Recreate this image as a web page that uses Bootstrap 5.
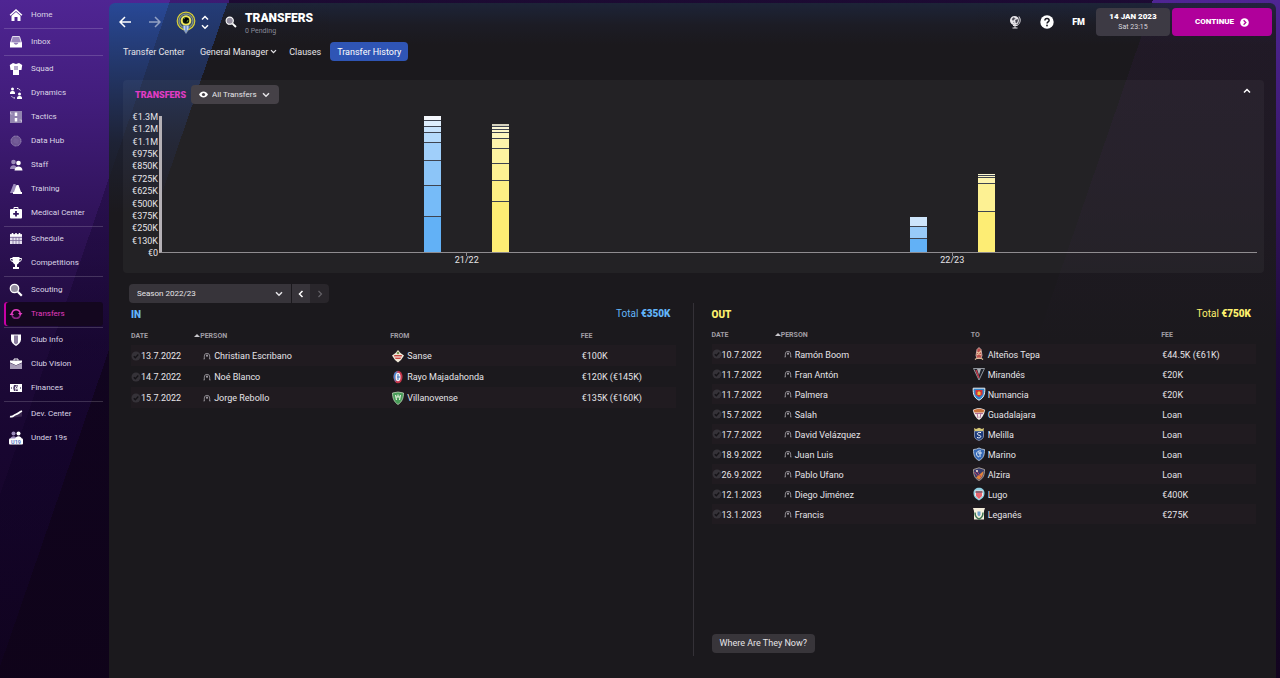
<!DOCTYPE html>
<html lang="en" data-bs-theme="dark">
<head>
<meta charset="utf-8">
<meta name="viewport" content="width=device-width, initial-scale=1">
<title>Transfers</title>
<link href="https://cdn.jsdelivr.net/npm/bootstrap@5.3.0/dist/css/bootstrap.min.css" rel="stylesheet">
<style>
body{
  font-family:Roboto,"Liberation Sans",sans-serif;font-size:9px;line-height:12px;color:#e6e4e8;
  background:
    linear-gradient(109deg,transparent 161px,rgba(10,0,30,.28) 161px 217px,rgba(14,3,24,.78) 217px 1090px,transparent 1090px) no-repeat,
    linear-gradient(180deg,#4f2593 0,#421d7c 100px,#2e1256 230px,#1e0a3a 340px,#180630 450px,#13041f 678px) no-repeat #13041f;
}
a{color:inherit;text-decoration:none}
button{line-height:12px}
/* sidebar */
.side{width:109px;flex:none;padding:3px 6px 0 4px}
.side a{display:flex;align-items:center;height:24px;padding-left:5px;gap:8px;font-size:8px;color:#dcd6e6;border-radius:3px}
.side a svg{width:14px;height:14px;flex:none}
.side a.now{background:#14071f;color:#e23bc0;box-shadow:inset 2px 0 #c800a5}
.side hr{margin:1px 0;border:0;height:1px;background:#fff;opacity:.17}
.side hr.tight{margin-bottom:0}
/* main panel */
.panel{
  margin:3px 4px 0 0;padding:4px 12px 22px 14px;border-radius:6px 6px 0 0;
  background:
    linear-gradient(180deg,rgba(27,25,29,0) 0,rgba(27,25,29,.35) 60px,rgba(27,25,29,.8) 140px,#1b191d 210px) no-repeat 0 0/220px 211px,
    linear-gradient(109deg,#284896 0 57px,#243c78 57px 112px,transparent 112px) no-repeat 0 0/100% 210px,
    linear-gradient(180deg,rgba(27,25,29,0) 0,rgba(27,25,29,.4) 180px,#1b191d 340px) no-repeat 100% 0/300px 341px,
    linear-gradient(109deg,transparent 987px,rgba(90,30,130,.1) 987px) no-repeat 0 0/100% 340px,
    linear-gradient(180deg,#1d2438 0,#1c1c25 22px,#1b191d 42px);
}
.topbar{margin-right:-8px;height:30px}
.ghost{background:none;border:0;padding:0;color:#fff;display:flex}
.heading{font-size:12px;line-height:15px;font-weight:900;color:#fff;margin:0}
.subline{font-size:7px;line-height:10px;color:#8a8c9a}
.datebox{width:74px;height:28px;border:0;border-radius:4px;background:#3d3a44;color:#d8d6dc;font-size:7px;line-height:10px;padding:0}
.datebox b{display:block;font-size:8px;font-weight:900;color:#fff}
.go{width:100px;height:28px;border:0;border-radius:4px;background:#b0009b;color:#fff;font-size:8px;font-weight:900}
.tabs{height:19px;margin-top:5px}
.tabs .active{background:#2f55b5;border-radius:4px;padding:0 7px;height:19px;color:#fff}
.tabs a,.tabs button{display:flex;align-items:center;color:#e6e4e8}
.box{background:rgba(255,255,255,.04);border-radius:4px;margin-top:19px;height:193px;padding:5px 7px 0 8px}
.pinktitle{font-size:9px;font-weight:900;color:#e03cc4;margin:0;padding:1px 4px 0 4px;min-width:60px}
.pick{position:relative;display:flex;align-items:center;background:#454147;border-radius:4px;height:19px}
.pick select{appearance:none;background:none;border:0;outline:0;color:#e6e4e8;font-size:8px;height:19px;width:100%;padding:0 8px}
.pick option{background:#333}
.pick svg{flex:none;pointer-events:none}
/* chart */
.chart{display:grid;grid-template-columns:27px 1fr;grid-template-rows:148px 14px;margin-top:7px}
.ylabs{display:flex;flex-direction:column;justify-content:space-between;text-align:right}
.plot{margin:5px 0 6px;border-left:3px solid #b5b1b6;border-bottom:1px solid #8f8c90;padding:0 62px;display:flex;margin-left:1px}
.season{flex:1;display:flex;align-items:flex-end;justify-content:center;gap:51px}
.stack{width:17px;display:flex;flex-direction:column}
.stack i{display:block;border-top:1px solid #3e4450}
.stack i:first-child{border-top:0}
.xlabs{grid-column:2;display:flex;padding:0 62px 0 66px;margin-top:-6px;text-align:center}
.xlabs span{flex:1}
.xlabs span::before{content:"";display:block;width:1px;height:3px;margin:0 auto -2px;background:#8f8c90}
/* season picker */
.seasonbar{margin:11px 0 0 6px}
.seasonbar .pick{width:162px;background:#37343a;border-radius:4px 0 0 4px}
.step{width:18px;height:19px;border:0;padding:0;background:#37343a;color:#fff;display:flex;align-items:center;justify-content:center}
.step:disabled{width:19px;background:#29262b;color:#656268;border-radius:0 4px 4px 0}
/* lists */
.lists{display:grid;grid-template-columns:1fr 1fr;flex:1}
.lists section{padding:5px 18px 0 8px}
.lists .outs{padding:5px 8px 0 18px;border-left:1px solid #343137;margin-left:-1px}
.lists h2{font-size:10px;line-height:12px;font-weight:900;margin:0;color:inherit}
.sum{font-size:10px;line-height:12px;padding-right:5px}
.sum b{font-weight:900}
.ins .tone{color:#62b4f8}
.outs .tone{color:#fdf06e}
.moves{width:100%;table-layout:fixed;color:#e6e4e8;margin-top:7px}
.outs .moves{margin-top:6px}
.moves th{font-size:7px;line-height:10px;height:17px;padding:0 0 2px;font-weight:700;color:#a09da4;vertical-align:middle}
.moves td{height:20px;padding:0;white-space:nowrap}
.ins td{height:21px}
.moves tbody tr:nth-child(odd){background:#201b20}
.moves td:nth-child(2){padding-left:9px}
.moves td:nth-child(3){padding-left:1px}
.moves td:nth-child(4){padding-left:1px}
.moves td svg{margin:-2px 2px -2px 0;vertical-align:middle}
.moves td:nth-child(2) svg{margin-right:3px}
.moves td:first-child svg{margin-right:0}
.moves td span{vertical-align:middle}
.sort{display:inline-block;border:3px solid transparent;border-top:0;border-bottom-color:#c9c7cc;vertical-align:1px}
.now-btn{background:#38353a;border:0;border-radius:4px;height:19px;color:#e6e4e8;padding:0 8px 2px;margin-bottom:3px}
</style>
</head>
<body>
<svg class="d-none">
  <symbol id="tick" viewBox="0 0 10 10"><circle cx="5" cy="5" r="4.5" fill="#353238"/><path d="M2.8 5.2l1.5 1.5 3-3.2" fill="none" stroke="#151317" stroke-width="1.3"/></symbol>
  <symbol id="man" viewBox="0 0 8 8"><path d="M1.300 7V4a2.700 2.700 0 0 1 5.400 0v3" fill="none" stroke="#858288" stroke-width="1"/><circle cx="4" cy="3.700" r="1.100" fill="#a09da3"/><path d="M0 7.200l2-2v2zM8 7.200l-2-2v2z" fill="#858288"/></symbol>
  <symbol id="dn" viewBox="0 0 8 6"><path d="M1 1.300l3 3 3-3" fill="none" stroke="currentColor" stroke-width="1.500"/></symbol>
  <symbol id="glass" viewBox="0 0 14 14"><circle cx="5.500" cy="5.500" r="4.200" fill="#948fa0" stroke="#fff" stroke-width="1.300"/><path d="M8.800 8.800l4 4" stroke="#fff" stroke-width="2.200"/></symbol>
</svg>
<div class="d-flex min-vh-100">
<nav class="side" aria-label="Main">
  <a href="#"><svg viewBox="0 0 14 14" fill="#fff"><path d="M7 1L.6 6.700l1 1L7 3l5.400 4.700 1-1z"/><path d="M2.500 7.800L7 4l4.500 3.800V13h-3V9h-3v4h-3z"/></svg>Home</a><hr>
  <a href="#"><svg viewBox="0 0 14 14"><path d="M3.500 1.500h7L12.500 8h-11z" fill="#9a86bd" stroke="#fff" stroke-width=".8"/><path d="M1 7.500h3.500c.5 2.500 4.500 2.500 5 0H13v5H1z" fill="#fff"/></svg>Inbox</a><hr>
  <a href="#"><svg viewBox="0 0 14 14"><path d="M4 1L.8 3l.7 5H4v5h6V8h2.500l.7-5L10 1 7 2z" fill="#fff"/><path d="M6 4v4M8 4v4" stroke="#6a5599"/></svg>Squad</a>
  <a href="#"><svg viewBox="0 0 14 14" fill="#fff"><circle cx="3.500" cy="3" r="1.500"/><path d="M1 8V6.500c.5-2 4.500-2 5 0V8z"/><circle cx="10.500" cy="8" r="1.500"/><path d="M8 13v-1.500c.5-2 4.500-2 5 0V13z"/><path d="M8 2.500c2 0 3 1 3.500 2.500M6 12c-2 0-3-.5-3.500-2.500" fill="none" stroke="#fff" stroke-dasharray="1.500 1"/></svg>Dynamics</a>
  <a href="#"><svg viewBox="0 0 14 14"><rect x="1" y="1" width="12" height="12" fill="#9385b0"/><path d="M7 2.500v3.500M7 8v3.500" stroke="#fff" stroke-width="2.500"/><path d="M1.500 2v2h2M12.500 12v-2h-2" fill="none" stroke="#d8d0e4" stroke-width=".7"/></svg>Tactics</a>
  <a href="#"><svg viewBox="0 0 14 14"><circle cx="7" cy="7" r="5" fill="#6d5591" stroke="#a293be" stroke-dasharray="1 .5"/><path d="M4 7l2-3 4 2-1 4-4-1z" fill="#745d98"/></svg>Data Hub</a>
  <a href="#"><svg viewBox="0 0 14 14"><g fill="#9c8cbb"><circle cx="4.500" cy="4" r="2.300"/><path d="M1 11c0-5 7-5 7 0z"/></g><g fill="#fff"><circle cx="9.500" cy="5" r="2.300"/><path d="M5.500 12.500c0-5.500 8-5.500 8 0z"/></g></svg>Staff</a>
  <a href="#"><svg viewBox="0 0 14 14"><path d="M4.500 2h2l2 9H1z" fill="#9c8cbb"/><path d="M7.500 3h2l2.500 7h1v2H4v-2h1z" fill="#fff"/></svg>Training</a>
  <a href="#"><svg viewBox="0 0 14 14"><path d="M5 3.500v-2h4v2" fill="none" stroke="#fff"/><rect x="1" y="3" width="12" height="9.500" rx="1" fill="#fff"/><path d="M7 5v5.500M4.200 7.800h5.600" stroke="#33165f" stroke-width="1.800"/></svg>Medical Center</a><hr class="tight">
  <a href="#"><svg viewBox="0 0 14 14"><path d="M1 2.500h12V12H1z" fill="#e4deee"/><path d="M1 3h12M3.500 1v3M7 1v3M10.500 1v3" stroke="#fff" stroke-width="1.600"/><path d="M1 5.500h12M1 8.500h12M4 5v7M7 5v7M10 5v7" stroke="#7b6a9b" stroke-width=".8"/></svg>Schedule</a>
  <a href="#"><svg viewBox="0 0 14 14"><path d="M3.500 1h7v3c0 3-1.500 4-2.500 4.500V11h2v2H4v-2h2V8.500C5 8 3.500 7 3.500 4z" fill="#fff"/><path d="M4 2.500H1.500c0 2 .8 3 2.500 3M10 2.500h2.500c0 2-.8 3-2.500 3" fill="none" stroke="#fff"/></svg>Competitions</a><hr>
  <a href="#"><svg><use href="#glass"/></svg>Scouting</a>
  <a href="#" class="now" aria-current="page"><svg viewBox="0 0 14 14" fill="none" stroke-width="1.500"><path d="M3 6A4.200 4.200 0 0 1 11.200 6" stroke="#e23bc0"/><path d="M11.200 8A4.200 4.200 0 0 1 3 8" stroke="#8d2386"/><path d="M9 6h4.500l-2.200 2.800zM.5 8H5L2.700 5.200z" fill="#e23bc0" stroke="none"/></svg>Transfers</a><hr class="tight">
  <a href="#"><svg viewBox="0 0 14 14"><path d="M2 1.500h10v5c0 3-2.500 5-5 6.500-2.500-1.500-5-3.500-5-6.500z" fill="#fff"/><path d="M5 2.500h4v7.500l-2 1.500L5 10z" fill="#8a7d9e"/></svg>Club Info</a>
  <a href="#"><svg viewBox="0 0 14 14"><path d="M5 3.500V2h4v1.500" fill="none" stroke="#fff"/><path d="M1 6v6h12V6l-6 2.500z" fill="#a89db8"/><path d="M1 3.500h12v2L7 8.300 1 5.500z" fill="#fff"/></svg>Club Vision</a>
  <a href="#"><svg viewBox="0 0 14 14"><rect x="1" y="3" width="12" height="8" fill="#fff"/><path d="M5 4h4l-1 3 1 3H5l-.8-3z" fill="#493763"/><path d="M7.800 4.500L6 7.200h1.500L6.500 9.500" fill="none" stroke="#fff"/><path d="M2.500 6v2M11.500 6v2" stroke="#8a7d9e"/></svg>Finances</a><hr class="tight">
  <a href="#"><svg viewBox="0 0 14 14"><path d="M1 10c3 .5 4-2.500 6-2.500s3-2 6-3.500v5.500L1 11z" fill="#3a284f"/><path d="M1 9.500c3.500 1 4-2 6-2.200S10 5 13 4" fill="none" stroke="#fff" stroke-width="1.800"/></svg>Dev. Center</a>
  <a href="#"><svg viewBox="0 0 14 14"><g fill="#9c8cbb"><circle cx="4.500" cy="2.500" r="2"/><path d="M1 9c0-5 7-5 7 0z"/></g><g fill="#fff"><circle cx="9.500" cy="2.500" r="2"/><path d="M6 9c0-5 7-5 7 0z"/></g><rect y="7.500" width="14" height="6" rx="1" fill="#fff"/><text x="7" y="12.500" font-size="5.500" font-weight="700" text-anchor="middle" fill="#5a79c4">U19</text></svg>Under 19s</a>
</nav>

<main class="panel flex-fill d-flex flex-column">
  <header class="topbar d-flex align-items-center">
    <button class="ghost" aria-label="Back" style="margin-left:-4px"><svg width="12" height="12" viewBox="0 0 12 12" fill="none" stroke="currentColor" stroke-width="1.500"><path d="M12 6H1.500M6 1L1 6l5 5"/></svg></button>
    <button class="ghost opacity-50" aria-label="Forward" style="margin-left:18px"><svg width="12" height="12" viewBox="0 0 12 12" fill="none" stroke="currentColor" stroke-width="1.500"><path d="M0 6h10.500M6 1l5 5-5 5"/></svg></button>
    <svg width="20" height="23" viewBox="0 0 20 23" style="margin-left:15px"><path d="M6 17l4 6 4-6z" fill="#8a97a8"/><circle cx="10" cy="10" r="8.800" fill="#3c5265" stroke="#d9cf36" stroke-width="1.200"/><circle cx="10" cy="10" r="7" fill="none" stroke="#a6b2a5" stroke-width=".8"/><circle cx="10" cy="9.500" r="4.300" fill="#0e180b" stroke="#f0e65a" stroke-width="2"/><path d="M9 6.500l3 .5-.5 3.500-3 1z" fill="#000"/><path d="M8 8l1-2M11 11l1-2" stroke="#5e9636"/><path d="M7 14.500h6v3l-3 4-3-4z" fill="#7f9ed6"/><path d="M8.500 15v4M11.500 15v4" stroke="#d5deed" stroke-width=".8"/></svg>
    <button class="ghost flex-column" aria-label="Switch club" style="margin-left:5px;gap:3px"><svg width="8" height="6" viewBox="0 0 8 6"><path d="M1 4.500l3-3 3 3" fill="none" stroke="currentColor" stroke-width="1.500"/></svg><svg width="8" height="6"><use href="#dn"/></svg></button>
    <button class="ghost" aria-label="Search" style="margin-left:16px"><svg width="12" height="12"><use href="#glass"/></svg></button>
    <div style="margin-left:8px;padding-top:2px"><h1 class="heading">TRANSFERS</h1><div class="subline">0 Pending</div></div>
    <div class="ms-auto d-flex align-items-center">
      <button class="ghost" aria-label="World" style="margin-right:19px"><svg width="12" height="14" viewBox="0 0 12 14"><circle cx="5.500" cy="5.500" r="4.500" fill="#e8e6ea"/><path d="M3 4l2-1.500 1 1-2 2zM6.500 5l2.500-.5-1 3-1 .5zM4 7l1.500 1" fill="#44434f" stroke="#44434f" stroke-width=".5"/><path d="M10 1.500c2 3 1.500 7-2 9H4M6 10.500V13M3.500 13h5" fill="none" stroke="#e8e6ea" stroke-width="1"/></svg></button>
      <button class="ghost" aria-label="Help" style="margin-right:18px"><svg width="14" height="14" viewBox="0 0 14 14"><circle cx="7" cy="7" r="6.700" fill="#fff"/><path d="M4.900 5.400c0-2.600 4.200-2.500 4.200 0 0 1.500-2 1.500-2 3" fill="none" stroke="#17171f" stroke-width="1.500"/><circle cx="7" cy="10.500" r=".9" fill="#17171f"/></svg></button>
      <button class="ghost" style="margin-right:11px;font-weight:900">FM</button>
      <button class="datebox"><b>14 JAN 2023</b>Sat 23:15</button>
      <button class="go d-flex align-items-center justify-content-center" style="margin-left:2px;gap:6px">CONTINUE<svg width="9" height="9" viewBox="0 0 9 9"><circle cx="4.500" cy="4.500" r="4.300" fill="#fff"/><path d="M3.600 2.300l2.200 2.200-2.200 2.200" fill="none" stroke="#b0009b" stroke-width="1.300"/></svg></button>
    </div>
  </header>

  <nav class="tabs d-flex align-items-center" aria-label="Transfers">
    <a href="#">Transfer Center</a>
    <button class="ghost" style="margin-left:15px;gap:2px">General Manager<svg width="7" height="5"><use href="#dn"/></svg></button>
    <a href="#" style="margin-left:12px">Clauses</a>
    <a href="#" class="active" aria-current="page" style="margin-left:9px">Transfer History</a>
  </nav>

  <section class="box">
    <div class="d-flex align-items-center">
      <h2 class="pinktitle">TRANSFERS</h2>
      <div class="pick" style="width:88px;padding:0 9px 0 8px"><svg width="9" height="7" viewBox="0 0 9 7"><path d="M0 3.500C2-.5 7-.5 9 3.500 7 7.500 2 7.500 0 3.500z" fill="#fff"/><circle cx="4.500" cy="3.500" r="1.600" fill="#454147"/></svg><select aria-label="Show transfers" style="padding:0 0 0 4px"><option>All Transfers</option></select><svg width="8" height="6"><use href="#dn"/></svg></div>
      <button class="ghost ms-auto" aria-label="Collapse" style="margin:-8px 6px 0 0"><svg width="8" height="6" viewBox="0 0 8 6"><path d="M1 4.500l3-3 3 3" fill="none" stroke="currentColor" stroke-width="1.500"/></svg></button>
    </div>
    <div class="chart">
      <div class="ylabs"><span>€1.3M</span><span>€1.2M</span><span>€1.1M</span><span>€975K</span><span>€850K</span><span>€725K</span><span>€625K</span><span>€500K</span><span>€375K</span><span>€250K</span><span>€130K</span><span>€0</span></div>
      <div class="plot">
        <div class="season">
          <div class="stack"><i style="height:4px;background:#f4f8fd"></i><i style="height:6px;background:#deeefd"></i><i style="height:6px;background:#c8e3fc"></i><i style="height:10px;background:#b5dafb"></i><i style="height:18px;background:#a0cffa"></i><i style="height:25px;background:#8cc5f8"></i><i style="height:31px;background:#76bbf8"></i><i style="height:36px;background:#62b1f6"></i></div>
          <div class="stack"><i style="height:2px;background:#d5d2bd"></i><i style="height:3px;background:#fbf7d4"></i><i style="height:3px;background:#fdf7c8"></i><i style="height:6px;background:#fdf6bd"></i><i style="height:10px;background:#fdf4ab"></i><i style="height:15px;background:#fdf3a0"></i><i style="height:17px;background:#fdf193"></i><i style="height:21px;background:#fdef84"></i><i style="height:51px;background:#fded74"></i></div>
        </div>
        <div class="season">
          <div class="stack"><i style="height:9px;background:#cde5fc"></i><i style="height:12px;background:#98cbf9"></i><i style="height:14px;background:#62b1f6"></i></div>
          <div class="stack"><i style="height:1px;background:#fdf9d2"></i><i style="height:2px;background:#fdf6c0"></i><i style="height:6px;background:#fdf4ad"></i><i style="height:28px;background:#fdf193"></i><i style="height:41px;background:#fded74"></i></div>
        </div>
      </div>
      <div class="xlabs"><span>21/22</span><span>22/23</span></div>
    </div>
  </section>

  <div class="seasonbar d-flex">
    <div class="pick"><select aria-label="Season"><option>Season 2022/23</option></select><svg width="8" height="6" style="margin-right:8px"><use href="#dn"/></svg></div>
    <button class="step" aria-label="Previous season" style="margin-left:1px"><svg width="6" height="8" viewBox="0 0 6 8"><path d="M4.500 1l-3 3 3 3" fill="none" stroke="currentColor" stroke-width="1.500"/></svg></button>
    <button class="step" aria-label="Next season" disabled><svg width="6" height="8" viewBox="0 0 6 8"><path d="M1.500 1l3 3-3 3" fill="none" stroke="currentColor" stroke-width="1.200"/></svg></button>
  </div>

  <div class="lists">
    <section class="ins">
      <div class="d-flex justify-content-between tone"><h2 style="padding-top:1px">IN</h2><div class="sum">Total <b>€350K</b></div></div>
      <table class="moves">
        <colgroup><col style="width:11.600%"><col style="width:36%"><col style="width:35%"><col></colgroup>
        <thead><tr><th>DATE</th><th><i class="sort"></i>PERSON</th><th>FROM</th><th>FEE</th></tr></thead>
        <tbody>
          <tr><td><svg width="10" height="10"><use href="#tick"/></svg><span>13.7.2022</span></td><td><svg width="8" height="8"><use href="#man"/></svg><span>Christian Escribano</span></td><td><svg width="14" height="14" viewBox="0 0 14 14"><path d="M7 1l2.500 3L13 6.500 10 11l-3 2.500L4 11 1 6.500 4.500 4z" fill="#f1ead9"/><path d="M3 6h8l-1.500 4h-5z" fill="#c6473f"/><path d="M4 8h6" stroke="#fff"/><circle cx="7" cy="4" r="1.300" fill="#7a9454"/></svg><span>Sanse</span></td><td><span>€100K</span></td></tr>
          <tr><td><svg width="10" height="10"><use href="#tick"/></svg><span>14.7.2022</span></td><td><svg width="8" height="8"><use href="#man"/></svg><span>Noé Blanco</span></td><td><svg width="14" height="14" viewBox="0 0 14 14"><ellipse cx="7" cy="7" rx="4.500" ry="6.300" fill="#c4354a"/><path d="M7 1C1 2 2 10 5 12c-1-4-1-7 2-11z" fill="#4689d4"/><ellipse cx="7" cy="7" rx="2.500" ry="4.300" fill="#eef1f7"/><path d="M7 4v6M6 7h3" stroke="#3f72bd"/></svg><span>Rayo Majadahonda</span></td><td><span>€120K (€145K)</span></td></tr>
          <tr><td><svg width="10" height="10"><use href="#tick"/></svg><span>15.7.2022</span></td><td><svg width="8" height="8"><use href="#man"/></svg><span>Jorge Rebollo</span></td><td><svg width="14" height="14" viewBox="0 0 14 14"><path d="M1.500 2L7 1l5.500 1c0 5-1.500 9-5.500 11.500C3 11 1.500 7 1.500 2z" fill="#489b58" stroke="#cfe5c6" stroke-width=".7"/><path d="M4.500 4l1 5M7 3.500v2M9.500 4l-1 5M5 6h4" stroke="#e1efda" stroke-width="1.200"/></svg><span>Villanovense</span></td><td><span>€135K (€160K)</span></td></tr>
        </tbody>
      </table>
    </section>
    <section class="outs d-flex flex-column align-items-start">
      <div class="d-flex justify-content-between tone w-100"><h2 style="padding-top:1px">OUT</h2><div class="sum">Total <b>€750K</b></div></div>
      <table class="moves">
        <colgroup><col style="width:11.600%"><col style="width:36%"><col style="width:35%"><col></colgroup>
        <thead><tr><th>DATE</th><th><i class="sort"></i>PERSON</th><th>TO</th><th>FEE</th></tr></thead>
        <tbody>
          <tr><td><svg width="10" height="10"><use href="#tick"/></svg><span>10.7.2022</span></td><td><svg width="8" height="8"><use href="#man"/></svg><span>Ramón Boom</span></td><td><svg width="14" height="14" viewBox="0 0 14 14"><path d="M7 .5l2 2 1 6-1 3H5l-1-3 1-6z" fill="#b94e4c" stroke="#ecd6cd" stroke-width=".7"/><path d="M3 12.500c2-2 6-2 8 0M5 5l4 3M9 4L5 8" fill="none" stroke="#e6c49c" stroke-width="1.200"/></svg><span>Alteños Tepa</span></td><td><span>€44.5K (€61K)</span></td></tr>
          <tr><td><svg width="10" height="10"><use href="#tick"/></svg><span>11.7.2022</span></td><td><svg width="8" height="8"><use href="#man"/></svg><span>Fran Antón</span></td><td><svg width="14" height="14" viewBox="0 0 14 14"><path d="M1.500 1.500h11L7 13z" fill="#20252d" stroke="#aeb5bc" stroke-width=".8"/><path d="M5 2h4L7 8z" fill="#a9adb2"/><path d="M4 3l3 8" stroke="#c73a4b" stroke-width="1.400"/></svg><span>Mirandés</span></td><td><span>€20K</span></td></tr>
          <tr><td><svg width="10" height="10"><use href="#tick"/></svg><span>11.7.2022</span></td><td><svg width="8" height="8"><use href="#man"/></svg><span>Palmera</span></td><td><svg width="14" height="14" viewBox="0 0 14 14"><path d="M1.200 1.200h11.600c.3 6-1.300 10-5.800 12-4.500-2-6.100-6-5.800-12z" fill="#3386cc" stroke="#e9f2f7" stroke-width="1"/><path d="M3.500 3h7v4.500L7 10 3.500 7.500z" fill="#d33036"/><path d="M5.500 8V5.500L7 4l1.500 1.500V8z" fill="#f0bf3a"/></svg><span>Numancia</span></td><td><span>€20K</span></td></tr>
          <tr><td><svg width="10" height="10"><use href="#tick"/></svg><span>15.7.2022</span></td><td><svg width="8" height="8"><use href="#man"/></svg><span>Salah</span></td><td><svg width="14" height="14" viewBox="0 0 14 14"><path d="M.8 3C4 .8 10 .8 13.200 3 12 8 10 11.500 7 13 4 11.500 2 8 .8 3z" fill="#f2e9e6"/><path d="M1.500 3c3-1.500 8-1.500 11 0l-1 2.500h-9z" fill="#c9703c"/><path d="M5 6l1 5M9 6l-1 5M3 6.500l8 0" stroke="#a7618c" stroke-width=".9"/></svg><span>Guadalajara</span></td><td><span>Loan</span></td></tr>
          <tr><td><svg width="10" height="10"><use href="#tick"/></svg><span>17.7.2022</span></td><td><svg width="8" height="8"><use href="#man"/></svg><span>David Velázquez</span></td><td><svg width="14" height="14" viewBox="0 0 14 14"><path d="M2.500 4h9v5c0 2.500-2 3.500-4.500 4.500-2.500-1-4.500-2-4.500-4.500z" fill="#1d3b7c" stroke="#a7b5ca" stroke-width=".7"/><path d="M2 1l2 1 3-1.300L10 2l2-1-.5 3h-9z" fill="#d8ca78"/><path d="M9 5.500c-5-.5-4 2.500-2 2.700 3 .3 2 3.800-2 2.300" fill="none" stroke="#fff"/></svg><span>Melilla</span></td><td><span>Loan</span></td></tr>
          <tr><td><svg width="10" height="10"><use href="#tick"/></svg><span>18.9.2022</span></td><td><svg width="8" height="8"><use href="#man"/></svg><span>Juan Luis</span></td><td><svg width="14" height="14" viewBox="0 0 14 14"><path d="M1.500 2.500c2 0 3.500-.5 5.500-1.500 2 1 3.500 1.500 5.500 1.500 0 5.500-1 9-5.500 11-4.500-2-5.500-5.500-5.500-11z" fill="#3568b4" stroke="#c9d8ea" stroke-width=".8"/><path d="M9 4c-5-1-6 5-2 6M6 6h4M8 5v5" fill="none" stroke="#dfe9f5"/></svg><span>Marino</span></td><td><span>Loan</span></td></tr>
          <tr><td><svg width="10" height="10"><use href="#tick"/></svg><span>26.9.2022</span></td><td><svg width="8" height="8"><use href="#man"/></svg><span>Pablo Ufano</span></td><td><svg width="14" height="14" viewBox="0 0 14 14"><path d="M1.500 2.500L7 .8l5.500 1.700c0 5-1 9-5.500 11-4.500-2-5.500-6-5.500-11z" fill="#353b6d" stroke="#c2b7a7" stroke-width=".8"/><path d="M11.500 4L4 10.500l3 2.300c3-1.800 4.300-5 4.500-8.800z" fill="#e1843a"/><path d="M2.500 5l3 4M4 3l5 7" stroke="#b74664"/><circle cx="5" cy="4" r="1" fill="#f0e9dc"/></svg><span>Alzira</span></td><td><span>Loan</span></td></tr>
          <tr><td><svg width="10" height="10"><use href="#tick"/></svg><span>12.1.2023</span></td><td><svg width="8" height="8"><use href="#man"/></svg><span>Diego Jiménez</span></td><td><svg width="14" height="14" viewBox="0 0 14 14"><path d="M7 .8c3 0 5.500 2 5.500 5 0 4-2 6-5.500 7.700C3.500 11.800 1.500 9.800 1.500 5.800c0-3 2.500-5 5.500-5z" fill="#8fd0e2"/><path d="M3 3.500h8v5L7 12.500 3 8.500z" fill="#f4e5e7"/><path d="M4 6h6v3l-3 3-3-3z" fill="#e76671"/><path d="M3.500 5h7" stroke="#6a3b4c" stroke-width="1.500"/></svg><span>Lugo</span></td><td><span>€400K</span></td></tr>
          <tr><td><svg width="10" height="10"><use href="#tick"/></svg><span>13.1.2023</span></td><td><svg width="8" height="8"><use href="#man"/></svg><span>Francis</span></td><td><svg width="14" height="14" viewBox="0 0 14 14"><path d="M1 1h12l-1 3v8.500H2V4z" fill="#f5efdc"/><path d="M3 5.500c0 4 1.500 5.500 4 6.500 2.500-1 4-2.500 4-6.500" fill="none" stroke="#3d7350" stroke-width="1.500"/><path d="M5.500 4.500h3V8L7 9.500 5.500 8z" fill="#6b9fc9"/></svg><span>Leganés</span></td><td><span>€275K</span></td></tr>
        </tbody>
      </table>
      <button class="now-btn mt-auto">Where Are They Now?</button>
    </section>
  </div>
</main>
</div>
<script src="https://cdn.jsdelivr.net/npm/bootstrap@5.3.0/dist/js/bootstrap.bundle.min.js"></script>
</body>
</html>
